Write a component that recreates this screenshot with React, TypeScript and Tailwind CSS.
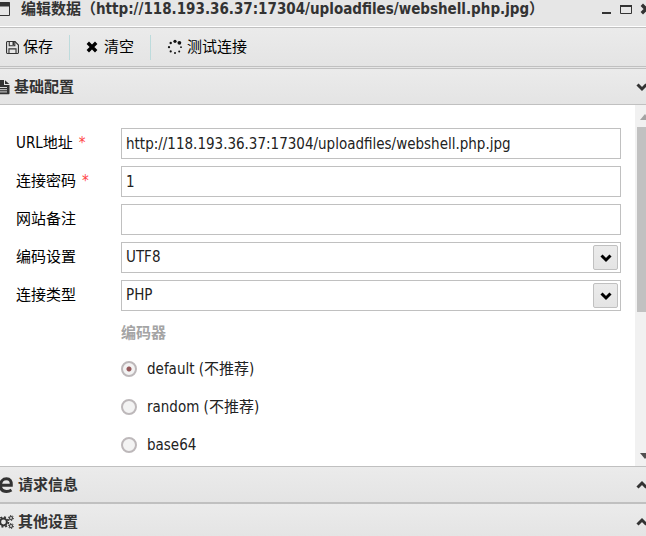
import React, { useState } from 'react'
import clsx from 'clsx'

const BAR = 'bg-linear-to-b from-[#ebebeb] to-[#e4e4e4]'
const FIELD = 'block h-[31px] w-full border border-[#c0c0c0] bg-white px-1 text-[15px] text-[#222222] outline-none'

interface ChevronProps {
    up?: boolean
    className?: string
}

function Chevron({ up = false, className }: ChevronProps) {
    return (
        <svg viewBox="0 0 12 12" className={clsx('size-3 shrink-0', className)} fill="none" stroke="currentColor" strokeWidth="3">
            <path d={up ? 'M1.5 8.5 6 4l4.5 4.5' : 'M1.5 3.5 6 8l4.5-4.5'} />
        </svg>
    )
}

function SaveIcon() {
    return (
        <svg viewBox="0 0 14 14" className="size-[13px]" fill="none" stroke="#333333">
            <path d="M1.5.6h8.2l3.7 3.7v8.2a.9.9 0 0 1-.9.9h-11a.9.9 0 0 1-.9-.9v-11a.9.9 0 0 1 .9-.9z" strokeWidth="1.2" />
            <path d="M3.5.6v4.5h6V.6M3.2 13.4V8.5h7.6v4.9" strokeWidth="1.2" />
            <path d="M7.8 1.2v3" strokeWidth="1.6" />
        </svg>
    )
}

function CrossIcon({ className }: { className?: string }) {
    return (
        <svg viewBox="0 0 12 12" className={clsx('size-3', className)} fill="none" stroke="currentColor" strokeWidth="3.4">
            <path d="m1.8 1.8 8.4 8.4M10.2 1.8l-8.4 8.4" />
        </svg>
    )
}

function SpinnerIcon() {
    return (
        <svg viewBox="0 0 16 16" className="size-4" fill="#111111">
            <circle cx="8" cy="2.3" r="1.6" />
            <circle cx="12.4" cy="3.8" r="1.9" />
            <circle cx="14" cy="8.2" r=".9" />
            <circle cx="12.2" cy="12.4" r="1" />
            <circle cx="8" cy="14" r="1" />
            <circle cx="3.7" cy="12.4" r="1.1" />
            <circle cx="2" cy="8.2" r="1.1" />
            <circle cx="3.7" cy="4" r="1.2" />
        </svg>
    )
}

function FileIcon() {
    return (
        <svg viewBox="0 0 14 16" className="h-4 w-3.5" fill="#333333">
            <path d="M1 1h7v5h5.5v8.5a.8.8 0 0 1-.8.8H1z" />
            <path d="M9 1.2 13.3 5H9z" />
            <path d="M3 8.5h8M3 10.7h8M3 12.9h8" stroke="#e8e8e8" strokeWidth=".9" />
        </svg>
    )
}

// Browser mark: open ring with a cross bar
function BrowserIcon() {
    return (
        <svg viewBox="0 0 18 18" className="size-[18px]" fill="none" stroke="#333333">
            <path d="M15.5 14c-1.6 1-3.2 1.4-5 1.4-3.6 0-6-2-6-5.9 0-4 2.3-6.7 6-6.7 3.4 0 5 2.2 4.8 6.4H6" strokeWidth="3" />
        </svg>
    )
}

function GearsIcon() {
    return (
        <svg viewBox="0 0 18 16" className="h-4 w-[18px]" fill="none" stroke="#333333">
            <circle cx="7.5" cy="8" r="3.4" strokeWidth="2" />
            <circle cx="7.5" cy="8" r="5" strokeWidth="1.6" strokeDasharray="1.96 1.96" />
            <circle cx="15" cy="4" r="1.5" strokeWidth="1.1" />
            <circle cx="15" cy="4" r="2.5" strokeWidth="1" strokeDasharray="1.3 1.3" />
            <circle cx="15" cy="12" r="1.5" strokeWidth="1.1" />
            <circle cx="15" cy="12" r="2.5" strokeWidth="1" strokeDasharray="1.3 1.3" />
        </svg>
    )
}

interface SectionBarProps {
    icon: React.ReactNode
    title: string
    open: boolean
    onToggle?: () => void
}

function SectionBar({ icon, title, open, onToggle }: SectionBarProps) {
    return (
        <button
            type="button"
            onClick={onToggle}
            aria-expanded={open}
            className={clsx('flex h-[35px] w-full items-center justify-between pr-1 pl-0.5 text-[#333333]', BAR)}
        >
            <span className="flex items-center gap-1">
                {icon}
                <span className="text-[15px] leading-5 font-bold">{title}</span>
            </span>
            <Chevron up={!open} />
        </button>
    )
}

interface RowProps {
    id: string
    label: string
    required?: boolean
    children: React.ReactNode
}

function Row({ id, label, required = false, children }: RowProps) {
    return (
        <div className="flex h-[38px] items-start">
            <label htmlFor={id} className="w-[105px] shrink-0 pt-[5px] text-[15px] leading-5 text-black">
                {label}
                {required && <span className="pl-1.5 text-[#ff4444]">*</span>}
            </label>
            <div className="relative min-w-0 flex-1">{children}</div>
        </div>
    )
}

function SelectField({ id, options }: { id: string; options: string[] }) {
    return (
        <>
            <select id={id} className={clsx(FIELD, 'appearance-none')}>
                {options.map((o) => (
                    <option key={o}>{o}</option>
                ))}
            </select>
            <span
                className={clsx(
                    'pointer-events-none absolute top-[3px] right-[3px] flex size-[25px] items-center justify-center rounded-xs border border-[#c0c0c0] text-black',
                    BAR,
                )}
            >
                <Chevron />
            </span>
        </>
    )
}

const ENCODERS = [
    { value: 'default', label: 'default (不推荐)' },
    { value: 'random', label: 'random (不推荐)' },
    { value: 'base64', label: 'base64' },
]

export default function App() {
    const [encoder, setEncoder] = useState('default')
    const [url, setUrl] = useState('http://118.193.36.37:17304/uploadfiles/webshell.php.jpg')
    const [password, setPassword] = useState('1')

    return (
        <div className="min-h-screen overflow-hidden bg-[#e6e6e6] font-['DejaVu_Sans_Condensed','Noto_Sans','Noto_Sans_CJK_SC',sans-serif]">
            <div className="-mx-1.5">
                {/* Title bar */}
                <header className="flex h-[27px] items-start justify-between border-b border-white bg-[#e6e6e6] text-[#333333]">
                    <div className="flex items-center pl-0.5">
                        <svg viewBox="0 0 14 15" className="mr-[11px] h-[15px] w-3.5" fill="none" stroke="#333333">
                            <path d="M.5.5h13v13H.5z" />
                            <path d="M0 2.5h14" strokeWidth="4" />
                        </svg>
                        <h1 className="text-[15px] leading-[18px] font-bold whitespace-nowrap">
                            编辑数据（http://118.193.36.37:17304/uploadfiles/webshell.php.jpg）
                        </h1>
                    </div>
                    <div className="flex h-[18px] items-center gap-2">
                        <button type="button" aria-label="最小化">
                            <svg viewBox="0 0 12 12" className="size-3" fill="#333333">
                                <path d="M2 9h9v2H2z" />
                            </svg>
                        </button>
                        <button type="button" aria-label="最大化">
                            <svg viewBox="0 0 12 12" className="size-3" fill="none" stroke="#333333">
                                <path d="M.5 2.5h11v8H.5z" />
                                <path d="M0 3h12" strokeWidth="2" />
                            </svg>
                        </button>
                        <button type="button" aria-label="关闭">
                            <CrossIcon />
                        </button>
                    </div>
                </header>

                {/* Toolbar */}
                <div className={clsx('flex h-10 items-center border-y border-[#c0c0c0] pl-3 text-[15px] leading-5 text-black', BAR)}>
                    <button type="button" className="flex items-center gap-1">
                        <SaveIcon />
                        保存
                    </button>
                    <span className="mx-4 h-[25px] w-px bg-[#bddbdc]" />
                    <button type="button" className="flex items-center gap-1.5">
                        <CrossIcon />
                        清空
                    </button>
                    <span className="mx-4 h-[25px] w-px bg-[#bddbdc]" />
                    <button type="button" className="flex items-center gap-1">
                        <SpinnerIcon />
                        测试连接
                    </button>
                </div>

                {/* Basic settings */}
                <section className="mt-px border-y border-[#c0c0c0]">
                    <SectionBar icon={<FileIcon />} title="基础配置" open />
                    <div className="flex border-t border-[#c0c0c0] bg-white">
                        <form className="min-w-0 flex-1 pt-[23px] pr-3.5 pb-0.5 pl-[22px]">
                            <Row id="url" label="URL地址" required>
                                <input id="url" value={url} onChange={(e) => setUrl(e.target.value)} className={FIELD} />
                            </Row>
                            <Row id="password" label="连接密码" required>
                                <input id="password" value={password} onChange={(e) => setPassword(e.target.value)} className={FIELD} />
                            </Row>
                            <Row id="note" label="网站备注">
                                <input id="note" className={FIELD} />
                            </Row>
                            <Row id="encode" label="编码设置">
                                <SelectField id="encode" options={['UTF8', 'GBK']} />
                            </Row>
                            <Row id="type" label="连接类型">
                                <SelectField id="type" options={['PHP', 'ASP']} />
                            </Row>
                            <fieldset className="pl-[105px]">
                                <legend className="h-8 pt-[5px] text-[15px] leading-5 font-bold text-[#a4a4a4]">编码器</legend>
                                {ENCODERS.map((item) => (
                                    <label key={item.value} className="flex h-[38px] items-center gap-2.5 text-[15px] text-[#222222]">
                                        <input
                                            type="radio"
                                            name="encoder"
                                            checked={encoder === item.value}
                                            onChange={() => setEncoder(item.value)}
                                            className="size-4 appearance-none rounded-full border-2 border-[#bdb8ba] bg-[#f3f3f3] checked:bg-[radial-gradient(circle,#95585a_2px,#f3f3f3_3px)]"
                                        />
                                        {item.label}
                                    </label>
                                ))}
                            </fieldset>
                        </form>
                        {/* Scroll track */}
                        <div className="flex w-[17px] shrink-0 flex-col items-center bg-[#f1f1f1]">
                            <svg viewBox="0 0 17 22" className="h-[22px] w-[17px]" fill="#a3a3a3">
                                <path d="m5 15 5-6 5 6z" />
                            </svg>
                            <div className="h-[185px] w-[13px] bg-[#c1c1c1]" />
                            <svg viewBox="0 0 17 17" className="mt-auto h-[17px] w-[17px]" fill="#505050">
                                <path d="m5 4 5 6 5-6z" />
                            </svg>
                        </div>
                    </div>
                </section>

                <section className="border-b-2 border-[#c0c0c0]">
                    <SectionBar icon={<BrowserIcon />} title="请求信息" open={false} />
                </section>
                <section>
                    <SectionBar icon={<GearsIcon />} title="其他设置" open={false} />
                </section>
            </div>
        </div>
    )
}
